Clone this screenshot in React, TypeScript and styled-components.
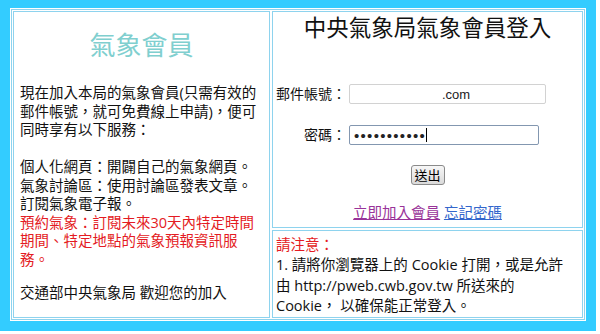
import React from "react";
import styled, { createGlobalStyle } from "styled-components";

const FONT = `"Open Sans", "Noto Sans CJK TC", sans-serif`;
const CJK = `"Noto Sans CJK TC", sans-serif`;

const Global = createGlobalStyle`
  html, body { margin: 0; padding: 0; background: #fff; }
  body { font-family: ${FONT}; color: #111; }
`;

const Frame = styled.div`
  width: 596px;
  height: 331px;
  box-sizing: border-box;
  background: #33ccff;
  padding: 8px 10px 10px 10px;
`;

const Table = styled.div`
  height: 100%;
  box-sizing: border-box;
  background: #fff;
  padding: 1px;
`;

const TableInner = styled.div`
  height: 100%;
  box-sizing: border-box;
  border: 1px solid #8ed3ee;
  padding: 1px;
  display: grid;
  grid-template-columns: 257px 311px;
  grid-template-rows: 217px 88px;
  gap: 2px;
`;

const Cell = styled.div`
  box-sizing: border-box;
  border: 1px solid #8ed3ee;
  background: #fff;
`;

const LeftCell = styled(Cell)`
  grid-row: 1 / span 2;
  padding: 6px 6px 0 6px;
`;

const LoginCell = styled(Cell)`
  padding: 0;
  display: flex;
  flex-direction: column;
  align-items: center;
`;

const NoteCell = styled(Cell)`
  padding: 3px 3px 0 3px;
  font-size: 14.5px;
`;

const MemberTitle = styled.h1`
  margin: 10px 0 0;
  text-align: center;
  font-family: ${CJK};
  font-size: 26px;
  line-height: 31px;
  font-weight: normal;
  color: #80cfcf;
`;

const Body = styled.div`
  margin-top: 25px;
  font-size: 14.5px;
  line-height: 18.5px;
`;

const Para = styled.p<{ $after?: number; $red?: boolean }>`
  margin: 0 0 ${(p) => p.$after ?? 0}px;
  color: ${(p) => (p.$red ? "#e41b23" : "#111")};
`;

const LoginTitle = styled.h2`
  margin: 0;
  font-family: ${CJK};
  font-size: 22.5px;
  line-height: 28px;
  font-weight: normal;
  color: #111;
  text-align: center;
`;

const FormGrid = styled.div`
  align-self: stretch;
  margin-top: 44px;
  display: grid;
  grid-template-columns: 73px auto;
  column-gap: 3px;
  row-gap: 21px;
  align-items: center;
`;

const Label = styled.label`
  justify-self: end;
  font-size: 14px;
  line-height: 20px;
  white-space: nowrap;
`;

const Field = styled.input<{ $w: number; $pad: number; $focus?: boolean }>`
  width: ${(p) => p.$w}px;
  height: 20px;
  box-sizing: border-box;
  border: 1px solid ${(p) => (p.$focus ? "#8397b0" : "#d2d2d2")};
  border-radius: 2px;
  padding: 0 0 0 ${(p) => p.$pad}px;
  margin: 0;
  font-family: "Liberation Sans", Arial, sans-serif;
  font-size: ${(p) => (p.$focus ? "15px" : "13px")};
  color: #222;
  background: #fff;
  outline: none;
  letter-spacing: ${(p) => (p.$focus ? "1.3px" : "0")};
`;

const FieldWrap = styled.div`
  position: relative;
  justify-self: start;
  display: flex;
`;

const Caret = styled.span`
  position: absolute;
  left: 77px;
  top: 3px;
  width: 1px;
  height: 14px;
  background: #000;
`;

const Submit = styled.button`
  margin-top: 20px;
  width: 34px;
  height: 20px;
  padding: 0;
  box-sizing: border-box;
  border: 1px solid #8a8a8a;
  border-radius: 3px;
  background: linear-gradient(#f7f7f7, #dadada);
  font-family: ${CJK};
  font-size: 13px;
  line-height: 18px;
  color: #000;
`;

const Links = styled.div`
  margin-top: 19px;
  font-size: 14.5px;
  line-height: 18px;
  text-align: center;
`;

const Link = styled.a<{ $visited?: boolean }>`
  color: ${(p) => (p.$visited ? "#993399" : "#3366cc")};
  text-decoration: underline;
`;

const Notice = styled.div`
  color: #e41b23;
  line-height: 21px;
`;

const NoteText = styled.div`
  line-height: 20.5px;
  color: #111;
`;

export default function App() {
  return (
    <>
      <Global />
      <Frame>
        <Table>
          <TableInner>
            <LeftCell>
              <MemberTitle>氣象會員</MemberTitle>
              <Body>
                <Para $after={18.5}>
                  現在加入本局的氣象會員(只需有效的
                  <br />
                  郵件帳號，就可免費線上申請)，便可
                  <br />
                  同時享有以下服務：
                </Para>
                <Para>
                  個人化網頁：開闢自己的氣象網頁。
                  <br />
                  氣象討論區：使用討論區發表文章。
                  <br />
                  訂閱氣象電子報。
                </Para>
                <Para $red $after={15}>
                  預約氣象：訂閱未來30天內特定時間
                  <br />
                  期間、特定地點的氣象預報資訊服
                  <br />
                  務。
                </Para>
                <Para>交通部中央氣象局 歡迎您的加入</Para>
              </Body>
            </LeftCell>
            <LoginCell>
              <LoginTitle>中央氣象局氣象會員登入</LoginTitle>
              <FormGrid>
                <Label>郵件帳號：</Label>
                <FieldWrap>
                  <Field $w={197} $pad={92} type="text" value=".com" readOnly />
                </FieldWrap>
                <Label>密碼：</Label>
                <FieldWrap>
                  <Field $w={190} $pad={4} $focus type="password" value="xxxxxxxxxxx" readOnly />
                  <Caret />
                </FieldWrap>
              </FormGrid>
              <Submit type="button">送出</Submit>
              <Links>
                <Link $visited href="#">立即加入會員</Link> <Link href="#">忘記密碼</Link>
              </Links>
            </LoginCell>
            <NoteCell>
              <Notice>請注意：</Notice>
              <NoteText>
                1. 請將你瀏覽器上的 Cookie 打開，或是允許
                <br />
                由 http://pweb.cwb.gov.tw 所送來的
                <br />
                Cookie， 以確保能正常登入。
              </NoteText>
            </NoteCell>
          </TableInner>
        </Table>
      </Frame>
    </>
  );
}
